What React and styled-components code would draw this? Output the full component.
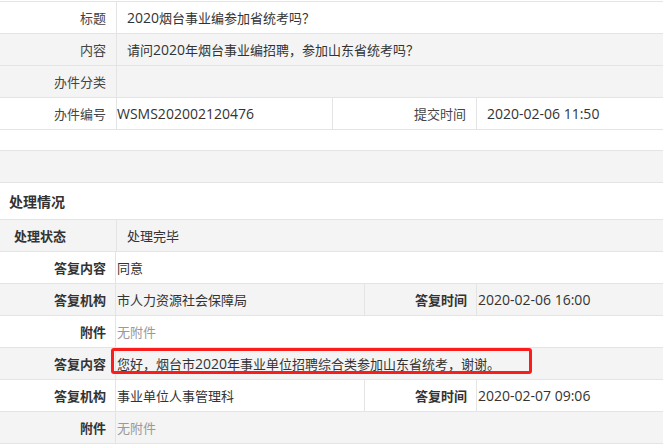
import React from "react";
import styled, { createGlobalStyle, css } from "styled-components";

const GlobalStyle = createGlobalStyle`
  html, body {
    margin: 0;
    padding: 0;
    background: #fff;
  }
  body {
    font-family: "Open Sans", "Noto Sans CJK SC", sans-serif;
    font-size: 13px;
    color: #333;
  }
`;

const LINE = "#e4e4e4";
const GREY = "#f4f4f4";

const Page = styled.div`
  width: 663px;
  padding-top: 1px;
`;

const Table = styled.div`
  border-top: 1px solid ${LINE};
`;

const Row = styled.div`
  display: flex;
  height: 31px;
  border-bottom: 1px solid ${LINE};
  background: ${({ $grey }) => ($grey ? GREY : "#fff")};
`;

const Label = styled.div`
  flex: none;
  width: ${({ $w }) => $w}px;
  display: flex;
  align-items: center;
  justify-content: flex-end;
  padding-right: ${({ $pr }) => ($pr != null ? $pr : 10)}px;
  box-sizing: border-box;
  border-right: 1px solid ${LINE};
  color: #444;
  white-space: nowrap;
  ${({ $bold }) =>
    $bold &&
    css`
      font-weight: bold;
      color: #333;
    `};
  ${({ $left }) =>
    $left &&
    css`
      justify-content: flex-start;
      padding-left: 14px;
    `};
`;

const Value = styled.div`
  position: relative;
  display: flex;
  align-items: center;
  padding-left: ${({ $pl }) => $pl || 0}px;
  white-space: pre;
  color: ${({ $muted }) => ($muted ? "#999" : "#333")};
  ${({ $w }) =>
    $w
      ? css`
          flex: none;
          width: ${$w}px;
          box-sizing: border-box;
          border-right: 1px solid ${LINE};
        `
      : css`
          flex: 1;
        `};
`;

// latin runs render a touch wider in the original page
const Latin = styled.span`
  font-size: 14px;
`;

const Spacer = styled.div`
  height: 20px;
`;

const GreyBar = styled.div`
  height: 31px;
  background: ${GREY};
  border-top: 1px solid ${LINE};
  border-bottom: 1px solid ${LINE};
`;

const SectionTitle = styled.div`
  height: 36px;
  display: flex;
  align-items: center;
  padding-left: 9px;
  font-size: 14px;
  font-weight: bold;
  color: #333;
  border-bottom: 1px solid ${LINE};
`;

const Highlight = styled.span`
  position: absolute;
  left: -5px;
  top: 0;
  width: 421px;
  height: 26px;
  box-sizing: border-box;
  border: 3px solid #fb1c1c;
  border-radius: 3px;
  pointer-events: none;
`;

function Txt({ children }) {
  const parts = String(children).split(/([A-Za-z0-9:\- ]+)/);
  return (
    <span>
      {parts.map((p, i) =>
        i % 2 ? <Latin key={i}>{p}</Latin> : p ? <span key={i}>{p}</span> : null
      )}
    </span>
  );
}

export default function App() {
  return (
    <Page>
      <GlobalStyle />
      <Table>
        <Row>
          <Label $w={117}>标题</Label>
          <Value $pl={10}>
            <Txt>2020烟台事业编参加省统考吗？</Txt>
          </Value>
        </Row>
        <Row $grey>
          <Label $w={117}>内容</Label>
          <Value $pl={10}>
            <Txt>请问2020年烟台事业编招聘，参加山东省统考吗？</Txt>
          </Value>
        </Row>
        <Row $grey>
          <Label $w={117}>办件分类</Label>
          <Value $pl={10} />
        </Row>
        <Row>
          <Label $w={117}>办件编号</Label>
          <Value $w={216}>
            <Txt>WSMS202002120476</Txt>
          </Value>
          <Label $w={144}>提交时间</Label>
          <Value $pl={10}>
            <Txt>2020-02-06 11:50</Txt>
          </Value>
        </Row>
      </Table>
      <Spacer />
      <GreyBar />
      <SectionTitle>处理情况</SectionTitle>
      <Row $grey>
        <Label $w={117} $bold $left>
          处理状态
        </Label>
        <Value $pl={10}>处理完毕</Value>
      </Row>
      <Row>
        <Label $w={116} $bold $pr={9}>
          答复内容
        </Label>
        <Value $pl={1}>同意</Value>
      </Row>
      <Row $grey>
        <Label $w={116} $bold $pr={9}>
          答复机构
        </Label>
        <Value $w={249} $pl={1}>
          市人力资源社会保障局
        </Value>
        <Label $w={112} $bold $pr={9}>
          答复时间
        </Label>
        <Value $pl={1}>
          <Txt>2020-02-06 16:00</Txt>
        </Value>
      </Row>
      <Row>
        <Label $w={116} $bold $pr={9}>
          附件
        </Label>
        <Value $pl={1} $muted>
          无附件
        </Value>
      </Row>
      <Row $grey>
        <Label $w={116} $bold $pr={9}>
          答复内容
        </Label>
        <Value $pl={1}>
          <Highlight />
          <Txt>您好，烟台市2020年事业单位招聘综合类参加山东省统考，谢谢。</Txt>
        </Value>
      </Row>
      <Row>
        <Label $w={116} $bold $pr={9}>
          答复机构
        </Label>
        <Value $w={249} $pl={1}>
          事业单位人事管理科
        </Value>
        <Label $w={112} $bold $pr={9}>
          答复时间
        </Label>
        <Value $pl={1}>
          <Txt>2020-02-07 09:06</Txt>
        </Value>
      </Row>
      <Row $grey>
        <Label $w={116} $bold $pr={9}>
          附件
        </Label>
        <Value $pl={1} $muted>
          无附件
        </Value>
      </Row>
    </Page>
  );
}
